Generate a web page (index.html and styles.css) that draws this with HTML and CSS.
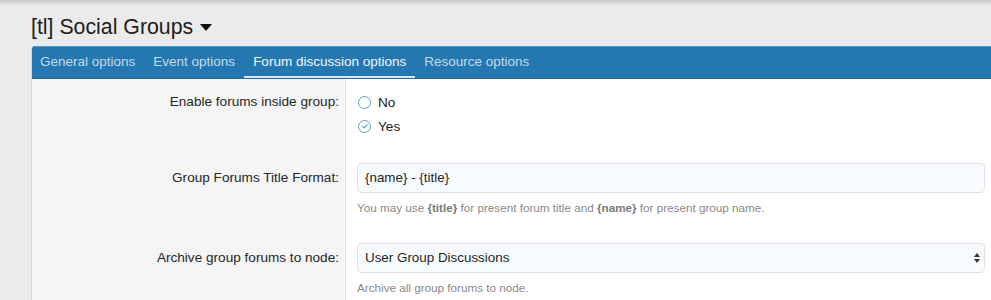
FILE: index.html
```html
<!DOCTYPE html>
<html>
<head>
<meta charset="utf-8">
<link rel="stylesheet" href="styles.css">
</head>
<body>
<div class="topshade"></div>
<div class="page">
  <h1 class="title">[tl] Social Groups <span class="caret"></span></h1>
  <div class="panel">
    <div class="tabs">
      <a class="tab">General options</a>
      <a class="tab">Event options</a>
      <a class="tab active">Forum discussion options</a>
      <a class="tab">Resource options</a>
    </div>
    <div class="body">
      <div class="row">
        <div class="label label-radio">Enable forums inside group:</div>
        <div class="field field-radio">
          <div class="radio"><span class="circle"></span>No</div>
          <div class="radio"><span class="circle checked"><svg width="12" height="12" viewBox="0 0 12 12"><path d="M3.4 6.2 L5.2 8 L8.6 4.4" fill="none" stroke="#5a9fd0" stroke-width="1.1"/></svg></span>Yes</div>
        </div>
      </div>
      <div class="row">
        <div class="label">Group Forums Title Format:</div>
        <div class="field">
          <div class="input">{name} - {title}</div>
          <div class="hint">You may use <b>{title}</b> for present forum title and <b>{name}</b> for present group name.</div>
        </div>
      </div>
      <div class="row">
        <div class="label">Archive group forums to node:</div>
        <div class="field">
          <div class="input select">User Group Discussions<svg class="arrows" width="6" height="10" viewBox="0 0 6 10"><path d="M3 0 L6 4 L0 4 Z M0 6 L6 6 L3 10 Z" fill="#333"/></svg></div>
          <div class="hint">Archive all group forums to node.</div>
        </div>
      </div>
    </div>
  </div>
</div>
</body>
</html>
```
FILE: styles.css
```css
* { box-sizing: border-box; }
html, body { margin: 0; padding: 0; }
body {
  background: #ebebeb;
  font-family: "Liberation Sans", Arial, sans-serif;
  color: #222;
  width: 991px;
  height: 300px;
  overflow: hidden;
  position: relative;
}
.topshade {
  position: absolute;
  left: 0; top: 0; right: 0;
  height: 6px;
  background: linear-gradient(#c9c9c9, rgba(235,235,235,0));
}
.page {
  padding: 8px 0 0 31px;
}
.title {
  margin: 0;
  font-size: 21.3px;
  font-weight: normal;
  line-height: 28px;
  height: 38px;
  color: #1d1d1d;
  display: flex;
  align-items: center;
}
.caret {
  display: inline-block;
  margin-left: 7px;
  margin-top: 1px;
  width: 0; height: 0;
  border-left: 6px solid transparent;
  border-right: 6px solid transparent;
  border-top: 7px solid #111;
}
.panel {
  width: 960px;
  border-left: 1px solid #d6d6d6;
  border-radius: 4px 0 0 0;
  overflow: hidden;
}
.tabs {
  display: flex;
  background: #2577b1;
  height: 33px;
  border-top: 1px solid #5a98c6;
  border-bottom: 1px solid #1f6a9e;
}
.tab {
  padding: 0 9px;
  font-size: 13.5px;
  line-height: 30px;
  color: #c3dcee;
  border-bottom: 2px solid transparent;
  white-space: nowrap;
}
.tab:first-child { padding-left: 8px; }
.tab.active {
  color: #f3f8fc;
  border-bottom-color: #d4e7f4;
}
.body {
  background: #fff;
}
.row {
  display: flex;
}
.label {
  width: 314px;
  flex: none;
  background: #f5f5f5;
  border-right: 1px solid #e4e4e4;
  text-align: right;
  padding: 12px 6px 0 0;
  font-size: 13.6px;
  line-height: 30px;
  color: #262626;
}
.row:first-child .label { padding-top: 11px; }
.label-radio { line-height: 24px; }
.field {
  flex: 1;
  padding: 12px 6px 13px 11px;
}
.field-radio {
  padding: 11px 6px 13px 11px;
}
.radio {
  display: flex;
  align-items: center;
  height: 24px;
  font-size: 13.6px;
  color: #222;
}
.circle {
  width: 13px; height: 13px;
  border: 1px solid #5a9fd0;
  border-radius: 50%;
  background: #fff;
  margin: 0 7px 0 1px;
  position: relative;
  flex: none;
}
.circle svg {
  position: absolute;
  left: -0.5px; top: -0.5px;
}
.input {
  height: 30px;
  border: 1px solid #dfe3e7;
  border-radius: 4px;
  background: #f8fbfd;
  font-size: 13.4px;
  line-height: 28px;
  padding: 0 7px;
  color: #1f1f1f;
  display: flex;
  align-items: center;
  justify-content: space-between;
}
.select { padding-right: 4px; }
.arrows { flex: none; }
.hint {
  margin: 7px 0 2px 0;
  font-size: 11.7px;
  line-height: 16px;
  color: #8a8a8a;
}
.hint b { color: #7a7a7a; }
```
